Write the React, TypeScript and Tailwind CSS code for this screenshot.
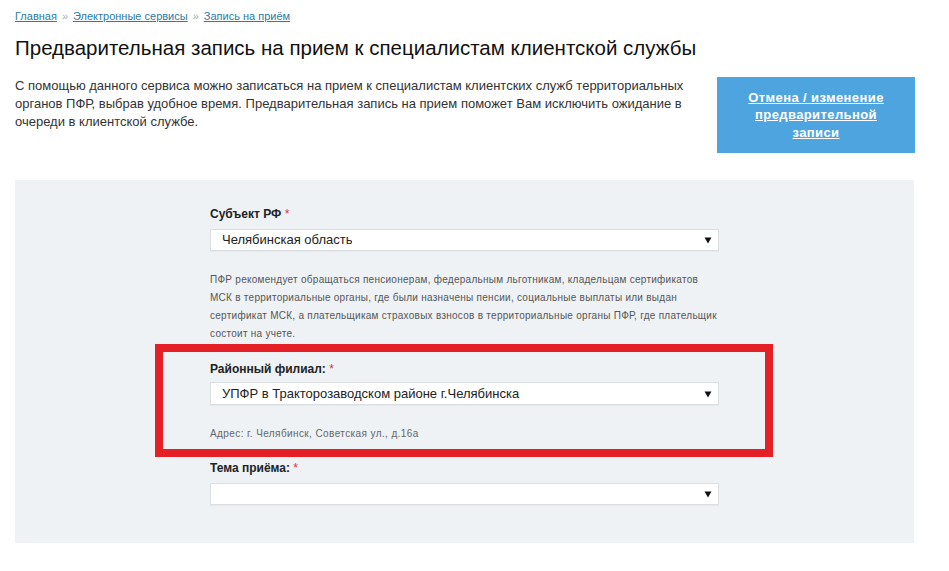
import React from "react";

// Стрелка выпадающего списка (как в нативном select)
function Arrow() {
  return (
    <svg width="8" height="8" viewBox="0 0 8 8" className="shrink-0">
      <path d="M0.5 1.5h7L4 7.5z" fill="#111" />
    </svg>
  );
}

function Select({ value }: { value?: string }) {
  return (
    <div className="flex h-[22px] items-center justify-between border border-[#dcdfe2] bg-white pl-[11px] pr-[6px] text-[13px] text-[#222] shadow-[0_1px_0_#e6e9ec]">
      <span className="truncate">{value}</span>
      <Arrow />
    </div>
  );
}

function Label({ text }: { text: string }) {
  return (
    <div className="h-[16px] text-[12px] leading-[16px] font-bold text-[#222]">
      {text} <span className="font-normal text-[#d33]">*</span>
    </div>
  );
}

export default function App() {
  return (
    <div className="min-h-[571px] w-[949px] bg-white px-[15px] font-['Liberation_Sans',Arial,sans-serif] text-[#222]">
      {/* Хлебные крошки */}
      <nav className="flex items-center gap-[4px] pt-[9px] text-[11px] leading-[14px]">
        <a className="text-[#2b7ba6] underline">Главная</a>
        <span className="px-[1px] text-[#aaa]">»</span>
        <a className="text-[#2b7ba6] underline">Электронные сервисы</a>
        <span className="px-[1px] text-[#aaa]">»</span>
        <a className="text-[#2b7ba6] underline">Запись на приём</a>
      </nav>

      <h1 className="mt-[13px] text-[20.5px] leading-[24px] font-normal text-[#111]">
        Предварительная запись на прием к специалистам клиентской службы
      </h1>

      <div className="mt-[17px] flex w-[900px] items-start justify-between">
        <p className="w-[680px] text-[13px] leading-[18px] text-[#333]">
          С помощью данного сервиса можно записаться на прием к специалистам клиентских служб территориальных
          органов ПФР, выбрав удобное время. Предварительная запись на прием поможет Вам исключить ожидание в
          очереди в клиентской службе.
        </p>
        <a className="flex h-[76px] w-[198px] items-center justify-center bg-[#4ea4df] px-[28px] text-center text-[13px] leading-[17.5px] font-bold tracking-[0.4px] text-white underline">
          Отмена / изменение предварительной записи
        </a>
      </div>

      {/* Форма */}
      <div className="mt-[27px] w-[899px] bg-[#eef2f5] pt-[26px] pb-[38px]">
        <div className="mx-auto w-[509px]">
          <Label text="Субъект РФ" />
          <div className="mt-[7px]">
            <Select value="Челябинская область" />
          </div>
          <p className="mt-[20px] text-[10px] leading-[18px] tracking-[0.27px] text-[#555]">
            ПФР рекомендует обращаться пенсионерам, федеральным льготникам, кладельцам сертификатов МСК в
            территориальные органы, где были назначены пенсии, социальные выплаты или выдан сертификат МСК, а
            плательщикам страховых взносов в территориальные органы ПФР, где плательщик состоит на учете.
          </p>

          <div className="relative mt-[18px]">
            <Label text="Районный филиал:" />
            <div className="mt-[5px]">
              <div className="flex h-[23px] items-center justify-between border border-[#dcdfe2] bg-white pl-[11px] pr-[6px] text-[13px] text-[#222] shadow-[0_1px_0_#e6e9ec]">
                <span>УПФР в Тракторозаводском районе г.Челябинска</span>
                <Arrow />
              </div>
            </div>
            <p className="mt-[22px] text-[10px] leading-[14px] tracking-[0.4px] text-[#666]">
              Адрес: г. Челябинск, Советская ул., д.16а
            </p>
            {/* Красная рамка-выделение поверх формы */}
            <div className="pointer-events-none absolute -top-[17px] -right-[54px] -bottom-[16px] -left-[55px] border-[8px] border-[#e41f26]" />
          </div>

          <div className="mt-[19px]">
            <Label text="Тема приёма:" />
            <div className="mt-[7px]">
              <Select />
            </div>
          </div>
        </div>
      </div>
    </div>
  );
}
